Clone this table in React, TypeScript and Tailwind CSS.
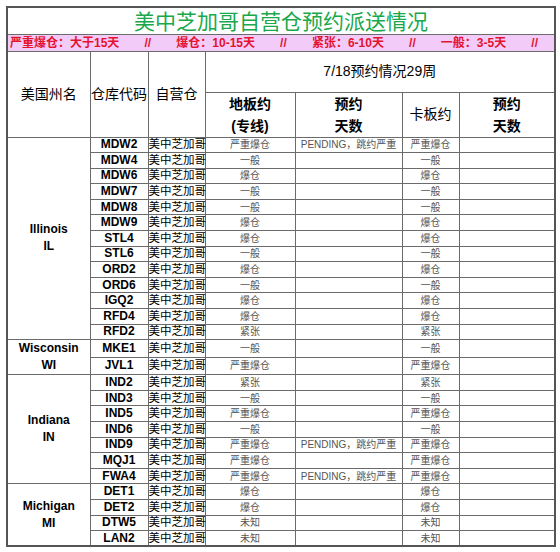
import React from "react";

type Row = { code: string; floor: string; note?: string; pallet: string };
type Group = { state: string; abbr: string; rows: Row[] };

const groups: Group[] = [
  {
    state: "Illinois",
    abbr: "IL",
    rows: [
      { code: "MDW2", floor: "严重爆仓", note: "PENDING，跳约严重", pallet: "严重爆仓" },
      { code: "MDW4", floor: "一般", pallet: "一般" },
      { code: "MDW6", floor: "爆仓", pallet: "爆仓" },
      { code: "MDW7", floor: "一般", pallet: "一般" },
      { code: "MDW8", floor: "一般", pallet: "一般" },
      { code: "MDW9", floor: "爆仓", pallet: "爆仓" },
      { code: "STL4", floor: "爆仓", pallet: "爆仓" },
      { code: "STL6", floor: "一般", pallet: "一般" },
      { code: "ORD2", floor: "爆仓", pallet: "爆仓" },
      { code: "ORD6", floor: "一般", pallet: "一般" },
      { code: "IGQ2", floor: "爆仓", pallet: "爆仓" },
      { code: "RFD4", floor: "爆仓", pallet: "爆仓" },
      { code: "RFD2", floor: "紧张", pallet: "紧张" },
    ],
  },
  {
    state: "Wisconsin",
    abbr: "WI",
    rows: [
      { code: "MKE1", floor: "一般", pallet: "一般" },
      { code: "JVL1", floor: "严重爆仓", pallet: "严重爆仓" },
    ],
  },
  {
    state: "Indiana",
    abbr: "IN",
    rows: [
      { code: "IND2", floor: "紧张", pallet: "紧张" },
      { code: "IND3", floor: "一般", pallet: "一般" },
      { code: "IND5", floor: "严重爆仓", pallet: "严重爆仓" },
      { code: "IND6", floor: "一般", pallet: "一般" },
      { code: "IND9", floor: "严重爆仓", note: "PENDING，跳约严重", pallet: "严重爆仓" },
      { code: "MQJ1", floor: "严重爆仓", pallet: "严重爆仓" },
      { code: "FWA4", floor: "严重爆仓", note: "PENDING，跳约严重", pallet: "严重爆仓" },
    ],
  },
  {
    state: "Michigan",
    abbr: "MI",
    rows: [
      { code: "DET1", floor: "爆仓", pallet: "爆仓" },
      { code: "DET2", floor: "爆仓", pallet: "爆仓" },
      { code: "DTW5", floor: "未知", pallet: "未知" },
      { code: "LAN2", floor: "未知", pallet: "未知" },
    ],
  },
];

const legend = ["严重爆仓：大于15天", "//", "爆仓：10-15天", "//", "紧张：6-10天", "//", "一般：3-5天", "//"];

const cell = "border border-[#6b6b6b] p-0 text-center align-middle";

export default function App() {
  return (
    <div className="min-h-screen bg-white pl-[6px] pt-[6px] font-['Liberation_Sans','Noto_Sans_CJK_SC',sans-serif] text-black">
      <table className="w-[548px] table-fixed border-collapse border-2 border-[#555]">
        <colgroup>
          <col className="w-[83px]" />
          <col className="w-[58px]" />
          <col className="w-[57px]" />
          <col className="w-[90px]" />
          <col className="w-[107px]" />
          <col className="w-[57px]" />
          <col className="w-[96px]" />
        </colgroup>
        <tbody>
          {/* Title */}
          <tr className="h-[27px]">
            <td colSpan={7} className={`${cell} text-[21px] leading-none text-[#1aa84b] font-['Noto_Sans_CJK_SC',sans-serif]`}>
              美中芝加哥自营仓预约派送情况
            </td>
          </tr>

          {/* Legend */}
          <tr className="h-[17px]">
            <td colSpan={7} className={`${cell} bg-[#f3cbf9]`}>
              <div className="flex items-center justify-between pl-[2px] pr-[16px] text-[12px] font-bold leading-none text-[#e5122f]">
                {legend.map((t, i) => (
                  <span key={i}>{t}</span>
                ))}
              </div>
            </td>
          </tr>

          {/* Header */}
          <tr className="h-[41px]">
            <td rowSpan={2} className={`${cell} text-[14px]`}>美国州名</td>
            <td rowSpan={2} className={`${cell} text-[14px] whitespace-nowrap`}>仓库代码</td>
            <td rowSpan={2} className={`${cell} text-[14px]`}>自营仓</td>
            <td colSpan={4} className={`${cell} text-[14px]`}>7/18预约情况29周</td>
          </tr>
          <tr className="h-[45px]">
            <td className={`${cell} text-[14px] font-bold leading-[22px]`}>
              地板约
              <br />
              (专线)
            </td>
            <td className={`${cell} text-[14px] font-bold leading-[22px]`}>
              预约
              <br />
              天数
            </td>
            <td className={`${cell} text-[14px]`}>卡板约</td>
            <td className={`${cell} text-[14px] font-bold leading-[22px]`}>
              预约
              <br />
              天数
            </td>
          </tr>

          {/* Data */}
          {groups.map((g) =>
            g.rows.map((r, i) => (
              <tr key={r.code} className="h-[15.6px]">
                {i === 0 && (
                  <td rowSpan={g.rows.length} className={`${cell} text-[12px] font-bold leading-[17px]`}>
                    {g.state}
                    <br />
                    {g.abbr}
                  </td>
                )}
                <td className={`${cell} text-[12px] font-bold leading-[13px]`}>{r.code}</td>
                <td className={`${cell} text-[11.5px] leading-[13px] whitespace-nowrap`}>美中芝加哥</td>
                <td className={`${cell} text-[10px] leading-[13px] text-[#555]`}>{r.floor}</td>
                <td className={`${cell} text-[10px] leading-[13px] text-[#555] whitespace-nowrap`}>{r.note ?? ""}</td>
                <td className={`${cell} text-[10px] leading-[13px] text-[#555]`}>{r.pallet}</td>
                <td className={cell}></td>
              </tr>
            ))
          )}
        </tbody>
      </table>
    </div>
  );
}
